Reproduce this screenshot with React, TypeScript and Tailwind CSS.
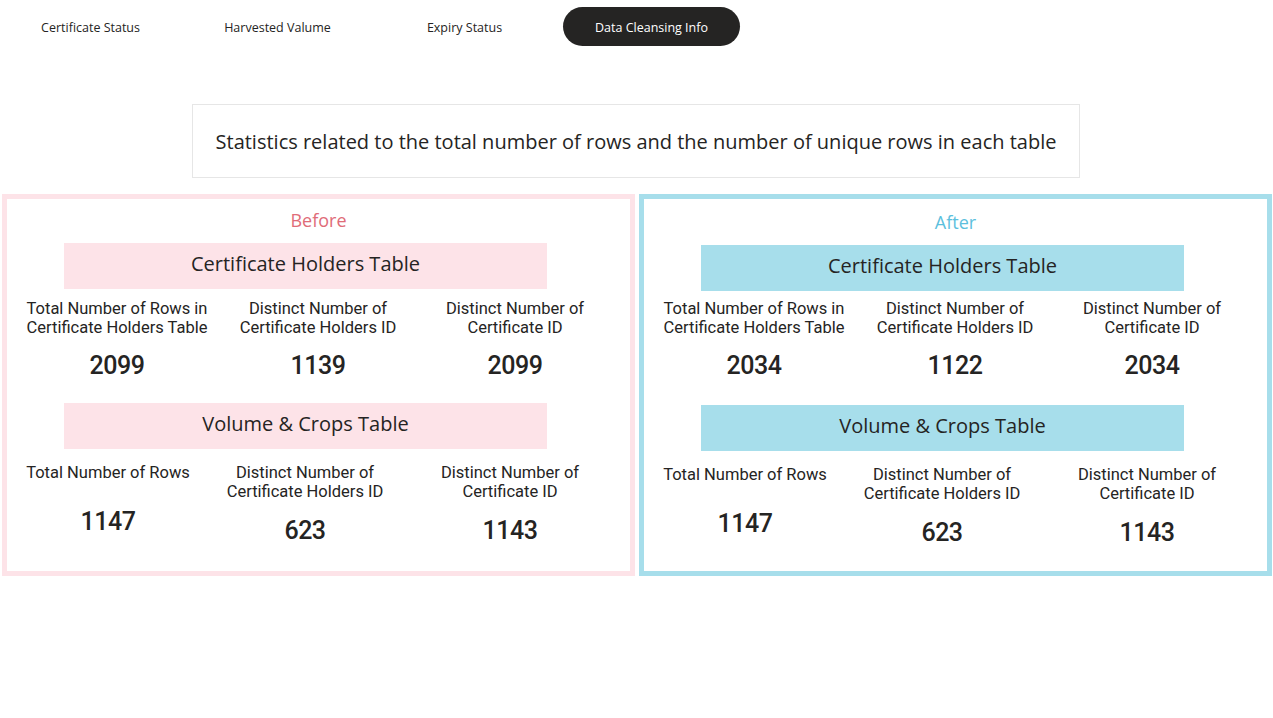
import React from 'react';

type Stat = { label: string[] };

interface Section {
  title: string;
  cols: string;
  stats: Stat[];
}

interface PanelProps {
  heading: string;
  headingClass: string;
  borderClass: string;
  barClass: string;
  after?: boolean;
  values: [string[], string[]];
}

const tabs = ['Certificate Status', 'Harvested Valume', 'Expiry Status', 'Data Cleansing Info'];

const segoe = "font-['Open_Sans',sans-serif]";
const din = "font-['Roboto',sans-serif]";

const sections: [Section, Section] = [
  {
    title: 'Certificate Holders Table',
    cols: 'grid-cols-[220px_182px_212px]',
    stats: [
      { label: ['Total Number of Rows in', 'Certificate Holders Table'] },
      { label: ['Distinct Number of', 'Certificate Holders ID'] },
      { label: ['Distinct Number of', 'Certificate ID'] },
    ],
  },
  {
    title: 'Volume & Crops Table',
    cols: 'grid-cols-[202px_192px_218px]',
    stats: [
      { label: ['Total Number of Rows'] },
      { label: ['Distinct Number of', 'Certificate Holders ID'] },
      { label: ['Distinct Number of', 'Certificate ID'] },
    ],
  },
];

const StatGrid: React.FC<{ section: Section; values: string[]; first: boolean }> = ({ section, values, first }) => (
  <div className={`grid ${section.cols}`}>
    {section.stats.map((s, i) => (
      <div key={i} className="flex flex-col items-center">
        <div className={`${din} text-[16.5px] leading-[19px] text-[#252423] text-center whitespace-nowrap`}>
          {s.label.map((l, j) => (
            <div key={j}>{l}</div>
          ))}
        </div>
        <div
          className={`${din} text-[25px] leading-[28px] tracking-[-0.5px] font-medium text-[#252423] ${
            first ? 'mt-[15px]' : s.label.length === 1 ? 'mt-[26px]' : 'mt-[16px]'
          }`}
        >
          {values[i]}
        </div>
      </div>
    ))}
  </div>
);

const Bar: React.FC<{ title: string; barClass: string; mt: string }> = ({ title, barClass, mt }) => (
  <div className={`ml-[57px] ${mt} w-[483px] h-[46px] pb-[4px] flex items-center justify-center ${barClass}`}>
    <span className={`${segoe} text-[20px] text-[#252423]`}>{title}</span>
  </div>
);

const Panel: React.FC<PanelProps> = ({ heading, headingClass, borderClass, barClass, after, values }) => (
  <div className={`w-[633px] h-[382px] border-[5px] ${borderClass} bg-white`}>
    <div className={after ? 'pt-[2px]' : ''}>
      <div className={`${segoe} text-[18px] leading-[24px] text-center pt-[9px] ${headingClass}`}>{heading}</div>
      <Bar title={sections[0].title} barClass={barClass} mt="mt-[11px]" />
      <div className={after ? 'mt-[8px]' : 'mt-[10px]'}>
        <StatGrid section={sections[0]} values={values[0]} first />
      </div>
      <Bar title={sections[1].title} barClass={barClass} mt={after ? 'mt-[25px]' : 'mt-[23px]'} />
      <div className="mt-[14px]">
        <StatGrid section={sections[1]} values={values[1]} first={false} />
      </div>
    </div>
  </div>
);

export default function App() {
  return (
    <div className="w-[1273px] h-[718px] bg-white overflow-hidden">
      {/* page tabs */}
      <div className="flex gap-[10px] pl-[2px] pt-[7px]">
        {tabs.map((t, i) => (
          <div
            key={t}
            className={`w-[177px] h-[39px] pt-[3px] flex items-center justify-center rounded-full ${segoe} text-[12.5px] ${
              i === 3 ? 'bg-[#252423] text-white' : 'text-[#252423]'
            }`}
          >
            {t}
          </div>
        ))}
      </div>

      <div className="ml-[192px] mt-[58px] w-[888px] h-[74px] border border-[#e6e6e6] pt-[2px] flex items-center justify-center">
        <span className={`${segoe} text-[20px] text-[#252423]`}>
          Statistics related to the total number of rows and the number of unique rows in each table
        </span>
      </div>

      <div className="flex gap-[4px] pl-[2px] mt-[16px]">
        <Panel
          heading="Before"
          headingClass="text-[#e06c78]"
          borderClass="border-[#fde3e8]"
          barClass="bg-[#fde3e8]"
          values={[
            ['2099', '1139', '2099'],
            ['1147', '623', '1143'],
          ]}
        />
        <Panel
          heading="After"
          headingClass="text-[#5cbfdd]"
          borderClass="border-[#a7deeb]"
          barClass="bg-[#a7deeb]"
          after
          values={[
            ['2034', '1122', '2034'],
            ['1147', '623', '1143'],
          ]}
        />
      </div>
    </div>
  );
}
